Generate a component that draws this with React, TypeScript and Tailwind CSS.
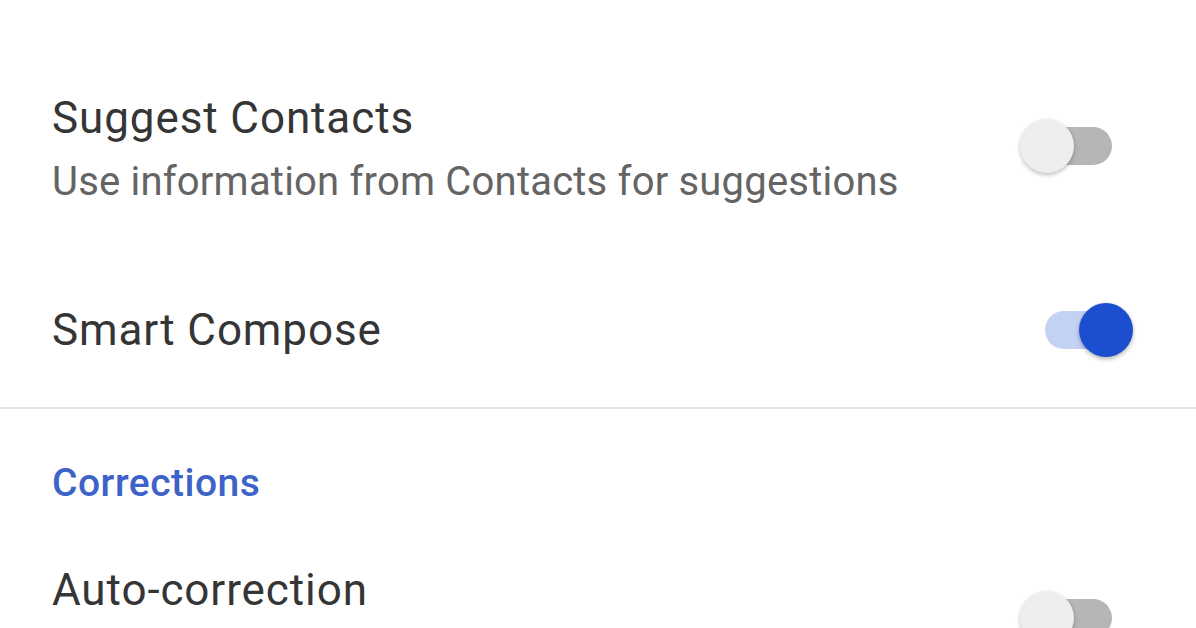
import React from "react";

interface ToggleProps {
  on: boolean;
}

function Toggle({ on }: ToggleProps) {
  return (
    <div className="relative h-[56px] w-[113px] shrink-0">
      <div
        className={
          on
            ? "absolute left-[25px] right-[21px] top-[9px] h-[38px] rounded-full bg-[#c3d1f2]"
            : "absolute left-[23px] right-[21px] top-[9px] h-[38px] rounded-full bg-[#b6b6b6]"
        }
      />
      <div
        className={
          on
            ? "absolute right-0 top-[1px] h-[54px] w-[54px] rounded-full bg-[#1c4fd0] shadow-[0_2px_4px_rgba(0,0,0,0.3)]"
            : "absolute left-0 top-[1px] h-[54px] w-[54px] rounded-full bg-[#eeeeee] shadow-[0_2px_4px_rgba(0,0,0,0.25)]"
        }
      />
    </div>
  );
}

interface SettingRowProps {
  title: string;
  summary?: string;
  on: boolean;
  className?: string;
}

function SettingRow({ title, summary, on, className }: SettingRowProps) {
  return (
    <div className={"flex items-center justify-between pl-[52px] pr-[63px] " + (className ?? "")}>
      <div className="flex flex-col">
        <div className="text-[44px] leading-[56px] tracking-[0.9px] text-[#353535]">{title}</div>
        {summary && (
          <div className="mt-[10px] text-[40px] leading-[52px] tracking-[0.2px] text-[#646464]">
            {summary}
          </div>
        )}
      </div>
      <div className={summary ? "-mt-[6px]" : ""}>
        <Toggle on={on} />
      </div>
    </div>
  );
}

export default function App() {
  return (
    <div className="h-[628px] w-[1196px] overflow-hidden bg-white font-['Roboto',sans-serif]">
      <SettingRow
        className="pt-[90px]"
        title="Suggest Contacts"
        summary="Use information from Contacts for suggestions"
        on={false}
      />
      <SettingRow className="mt-[94px]" title="Smart Compose" on />

      <div className="mt-[49px] h-[2px] w-full bg-[#e3e3e3]" />

      <div className="mt-[50px] pl-[52px] text-[39px] font-medium leading-[48px] tracking-[0.5px] text-[#3d62c8]">
        Corrections
      </div>

      <SettingRow
        className="mt-[55px]"
        title="Auto-correction"
        summary="Automatically correct misspelled words"
        on={false}
      />
    </div>
  );
}
